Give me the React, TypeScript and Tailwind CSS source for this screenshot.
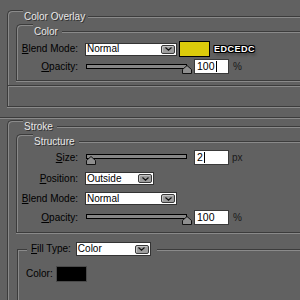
import React from "react";

function Btn() {
  return (
    <div className="ml-auto mr-[1px] w-[14px] h-[9px] shrink-0 bg-[#9c9c9c] border border-[#3a3a3a] rounded-[2px] flex items-center justify-center shadow-[inset_1px_1px_0_#c4c4c4]">
      <svg width="7" height="4" viewBox="0 0 7 4">
        <path d="M0.5 0.5 L3.5 3.2 L6.5 0.5" stroke="#111" strokeWidth="1.2" fill="none" />
      </svg>
    </div>
  );
}

function Thumb({ className }: { className: string }) {
  return (
    <svg className={"absolute " + className} width="10" height="9" viewBox="0 0 10 9">
      <polygon points="5,0.5 9.5,4.5 9.5,8.5 0.5,8.5 0.5,4.5" fill="#8e8e8e" stroke="#111" strokeWidth="1" />
    </svg>
  );
}

function Caret() {
  return <span className="inline-block w-[1px] h-[11px] bg-black ml-[1px]" />;
}

const titleCls =
  "whitespace-nowrap text-[#e8e8e8] [text-shadow:1px_1px_0_rgba(0,0,0,0.55)] leading-[10px]";

export default function App() {
  return (
    <div className="w-[300px] h-[300px] overflow-hidden bg-[#616161] text-[10px] leading-none text-black font-['Liberation_Sans',Arial,sans-serif]">
      <div className="pt-[10px]">
        {/* Color Overlay group */}
        <div className="ml-[7px]">
          <div className="flex h-[12px]">
            <div className="w-[16px] shrink-0 border-l border-t border-[#3c3c3c] rounded-tl-[5px] shadow-[inset_1px_1px_0_#8a8a8a]" />
            <span className={"pl-[1px] pr-[3px] pt-[2px] " + titleCls}>Color Overlay</span>
            <div className="flex-1 mt-[6px] h-[2px] border-t border-t-[#3c3c3c] border-b border-b-[#8a8a8a]" />
          </div>
          <div className="border-l border-b border-[#3c3c3c] shadow-[inset_1px_0_0_#8a8a8a,0_1px_0_#8a8a8a] pl-[8px] pb-[19px]">
            {/* Color inner group */}
            <div className="pt-[2px]">
              <div className="flex h-[12px]">
                <div className="w-[17px] shrink-0 border-l border-t border-[#3c3c3c] rounded-tl-[5px] shadow-[inset_1px_1px_0_#8a8a8a]" />
                <span className={"pl-[1px] pr-[4px] pt-[3px] " + titleCls}>Color</span>
                <div className="flex-1 mt-[7px] h-[2px] border-t border-t-[#3c3c3c] border-b border-b-[#8a8a8a]" />
              </div>
              <div className="border-l border-b border-[#3c3c3c] shadow-[inset_1px_0_0_#8a8a8a,0_1px_0_#8a8a8a] pt-[5px] pb-[6px]">
                <div className="flex items-center h-[16px]">
                  <div className="w-[61px] text-right">
                    <span className="underline underline-offset-[1px]">B</span>lend Mode:
                  </div>
                  <div className="ml-[7px] w-[92px] h-[13px] flex items-center bg-white border border-[#333] pl-[1px]">
                    <span>Normal</span>
                    <Btn />
                  </div>
                  <div className="ml-[2px] w-[31px] h-[16px] bg-[#dccb0b] border border-black" />
                  <span className="ml-[4px] text-[9px] font-bold tracking-[0.5px] text-white [text-shadow:1px_0_0_#000,-1px_0_0_#000,0_1px_0_#000,0_-1px_0_#000,1px_1px_0_#000,-1px_-1px_0_#000,1px_-1px_0_#000,-1px_1px_0_#000,2px_3px_3px_rgba(0,0,0,0.45)]">
                    EDCEDC
                  </span>
                </div>
                <div className="flex items-center h-[15px] mt-[2px]">
                  <div className="w-[61px] text-right">
                    <span className="underline underline-offset-[1px]">O</span>pacity:
                  </div>
                  <div className="relative ml-[8px] w-[101px] h-[15px]">
                    <div className="absolute left-0 right-0 top-[5px] h-[5px] border border-black bg-[#868686]" />
                    <Thumb className="left-[96px] top-[6px]" />
                  </div>
                  <div className="ml-[7px] w-[35px] h-[15px] bg-white border border-[#3a3a3a] flex items-center pl-[2px] text-[10.5px]">
                    <span>100</span>
                    <Caret />
                  </div>
                  <span className="ml-[4px] text-[#1a1a1a]">%</span>
                </div>
              </div>
            </div>
            <div className="-ml-[8px] mt-[4px] h-[2px] border-t border-t-[#3c3c3c] border-b border-b-[#8a8a8a]" />
          </div>
        </div>

        <div className="mt-[10px] h-[2px] border-t border-t-[#3c3c3c] border-b border-b-[#8a8a8a]" />

        {/* Stroke group */}
        <div className="ml-[7px] mt-[1px]">
          <div className="flex h-[12px]">
            <div className="w-[16px] shrink-0 border-l border-t border-[#3c3c3c] rounded-tl-[5px] shadow-[inset_1px_1px_0_#8a8a8a]" />
            <span className={"pl-[1px] pr-[4px] pt-[2px] " + titleCls}>Stroke</span>
            <div className="flex-1 mt-[6px] h-[2px] border-t border-t-[#3c3c3c] border-b border-b-[#8a8a8a]" />
          </div>
          <div className="border-l border-[#3c3c3c] shadow-[inset_1px_0_0_#8a8a8a] pl-[8px] h-[200px]">
            {/* Structure */}
            <div className="pt-[2px]">
              <div className="flex h-[12px]">
                <div className="w-[17px] shrink-0 border-l border-t border-[#3c3c3c] rounded-tl-[5px] shadow-[inset_1px_1px_0_#8a8a8a]" />
                <span className={"pl-[1px] pr-[4px] pt-[3px] " + titleCls}>Structure</span>
                <div className="flex-1 mt-[7px] h-[2px] border-t border-t-[#3c3c3c] border-b border-b-[#8a8a8a]" />
              </div>
              <div className="border-l border-b border-[#3c3c3c] shadow-[inset_1px_0_0_#8a8a8a,0_1px_0_#8a8a8a] pt-[4px] pb-[7px]">
                <div className="flex items-center h-[15px]">
                  <div className="w-[61px] text-right">
                    <span className="underline underline-offset-[1px]">S</span>ize:
                  </div>
                  <div className="relative ml-[8px] w-[101px] h-[15px]">
                    <div className="absolute left-0 right-0 top-[4px] h-[5px] border border-black bg-[#868686]" />
                    <Thumb className="left-[0px] top-[6px]" />
                  </div>
                  <div className="ml-[7px] w-[35px] h-[15px] bg-white border border-[#3a3a3a] flex items-center pl-[2px] text-[10.5px]">
                    <span>2</span>
                    <Caret />
                  </div>
                  <span className="ml-[3px] text-[#1a1a1a]">px</span>
                </div>
                <div className="flex items-center h-[13px] mt-[7px]">
                  <div className="w-[61px] text-right">
                    <span className="underline underline-offset-[1px]">P</span>osition:
                  </div>
                  <div className="ml-[7px] w-[69px] h-[13px] flex items-center bg-white border border-[#333] pl-[1px]">
                    <span>Outside</span>
                    <Btn />
                  </div>
                </div>
                <div className="flex items-center h-[13px] mt-[7px]">
                  <div className="w-[61px] text-right">
                    <span className="underline underline-offset-[1px]">B</span>lend Mode:
                  </div>
                  <div className="ml-[7px] w-[92px] h-[13px] flex items-center bg-white border border-[#333] pl-[1px]">
                    <span>Normal</span>
                    <Btn />
                  </div>
                </div>
                <div className="flex items-center h-[15px] mt-[5px]">
                  <div className="w-[61px] text-right">
                    <span className="underline underline-offset-[1px]">O</span>pacity:
                  </div>
                  <div className="relative ml-[8px] w-[101px] h-[15px]">
                    <div className="absolute left-0 right-0 top-[4px] h-[5px] border border-black bg-[#868686]" />
                    <Thumb className="left-[96px] top-[6px]" />
                  </div>
                  <div className="ml-[7px] w-[35px] h-[15px] bg-white border border-[#3a3a3a] flex items-center pl-[2px] text-[10.5px]">
                    <span>100</span>
                  </div>
                  <span className="ml-[4px] text-[#1a1a1a]">%</span>
                </div>
              </div>
            </div>

            {/* Fill Type */}
            <div className="ml-[1px] mt-[9px]">
              <div className="flex h-[14px]">
                <div className="w-[10px] shrink-0 mt-[7px] border-l border-t border-[#3c3c3c] shadow-[inset_1px_1px_0_#8a8a8a]" />
                <div className="self-center pl-[4px]">
                  <span className="underline underline-offset-[1px]">F</span>ill Type:
                </div>
                <div className="ml-[5px] w-[75px] h-[14px] flex items-center bg-white border border-[#333] pl-[1px]">
                  <span>Color</span>
                  <Btn />
                </div>
                <div className="flex-1 ml-[6px] mt-[7px] h-[2px] border-t border-t-[#3c3c3c] border-b border-b-[#8a8a8a]" />
              </div>
              <div className="border-l border-[#3c3c3c] shadow-[inset_1px_0_0_#8a8a8a] pl-[8px] pt-[10px] h-[60px]">
                <div className="flex items-center h-[16px]">
                  <span>Color:</span>
                  <div className="ml-[3px] w-[31px] h-[16px] bg-black border border-[#4a4a4a]" />
                </div>
              </div>
            </div>
          </div>
        </div>
      </div>
    </div>
  );
}
